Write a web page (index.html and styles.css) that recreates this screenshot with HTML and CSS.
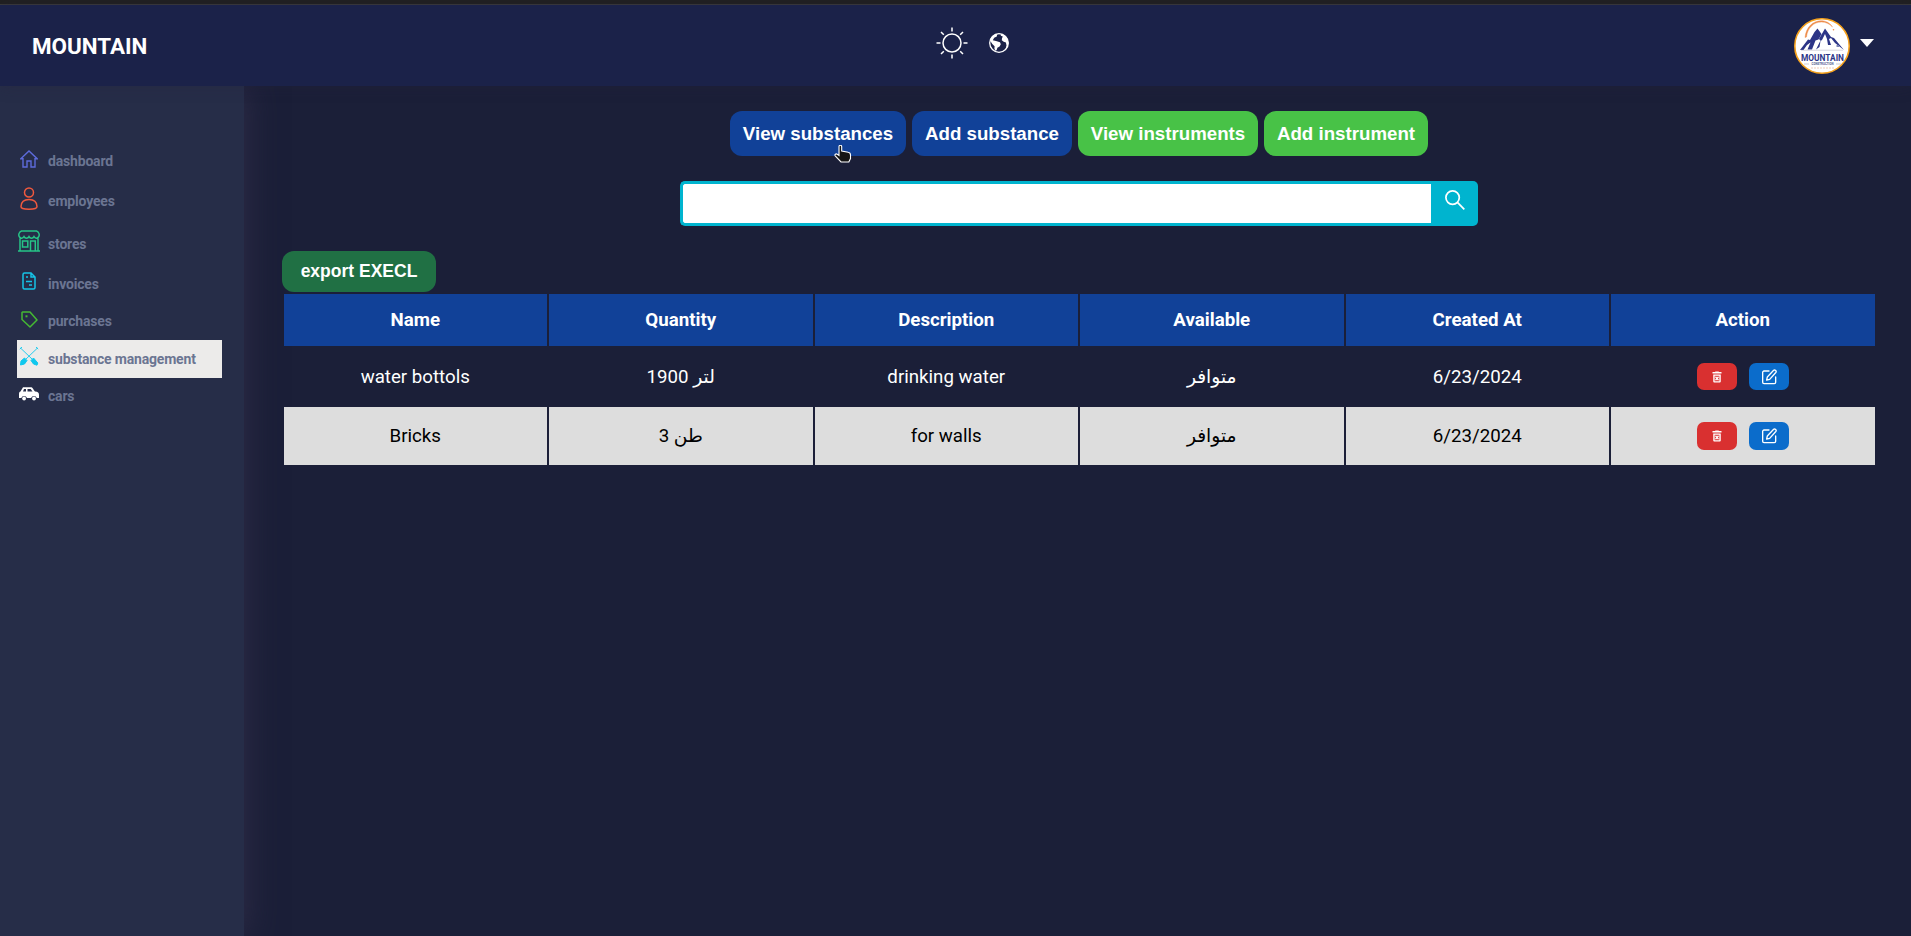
FILE: index.html
```html
<!DOCTYPE html>
<html lang="en">
<head>
<meta charset="utf-8">
<title>Mountain</title>
<link rel="stylesheet" href="styles.css">
</head>
<body>
<svg class="defs" width="0" height="0" aria-hidden="true">
  <symbol id="trash" viewBox="0 0 24 24"><path fill="currentColor" d="M3 2h5l1-1h6l1 1h5v3H3zM4.500 7h15v14a2 2 0 0 1-2 2h-11a2 2 0 0 1-2-2zm2.800 2.500v11h9.400v-11z" fill-rule="evenodd"/><path d="M9 11.500l6 7M15 11.500l-6 7" stroke="currentColor" stroke-width="2.500"/></symbol>
  <symbol id="edit" viewBox="0 0 24 24"><path fill="none" stroke="currentColor" stroke-width="2" stroke-linejoin="round" stroke-linecap="round" d="M12 3H4.500A2 2 0 0 0 2.500 5v15a2 2 0 0 0 2 2H20a2 2 0 0 0 2-2v-8M8.500 16.500l1-4.500 9.500-10c1.800-1.600 5 1.200 3.200 3.300L13 15.500z"/></symbol>
</svg>
<div class="strip"></div>
<header class="header">
  <div class="brand">MOUNTAIN</div>
  <div class="tools">
    <svg class="sun" viewBox="0 0 32 32"><g fill="none" stroke="#fff" stroke-width="1.500"><circle cx="16" cy="16" r="9"/><path d="M16 .5v4M16 27.500v4M.5 16h4M27.500 16h4M5 5l2.800 2.800M24.200 24.200L27 27M5 27l2.800-2.800M24.200 7.800L27 5"/></g></svg>
    <svg class="globe" viewBox="0 0 20 20"><circle cx="10" cy="10" r="9.300" fill="none" stroke="#fff" stroke-width="1.300"/><path fill="#fff" d="M6.500 1.300L8.200 1l-.4 2.400-2.600 1.400L3.800 7.200 7 8l4 1.200.8 2-1.200 2.300-2.200 1.200-.8 2.500-1.300.6-.9-2.400.2-2.200-2.300-2.200L1.500 8.300 1 8C1.500 5 3.500 2.500 6.500 1.300zM12 1c4.500 1 7.300 4.500 7.300 9l-.4 3-2.400 3.500 1-4-.6-3-2.200-.8-1.900-1.500.2-2 .8-1.600-2-.8z"/></svg>
  </div>
  <div class="profile">
    <svg class="avatar" viewBox="0 0 56 56"><circle cx="28" cy="28" r="27.200" fill="#fff" stroke="#f5a11c" stroke-width="1.600"/>
      <path d="M11 19.500C12 9 19 2.800 27 2.800c5 0 9 2.200 11.500 6.200-3-3.200-7-5-11-5C19.500 4 13.500 10 12.500 19z" fill="#ed8c4a" stroke="#ed8c4a" stroke-width=".4"/>
      <path d="M6 32l8-10.500 2 .5 4.500-8 3-3.500 4 5.500-3 5.500-3 1-3.500 9h-4.500l3-7-3.500 2.500L9.500 32zM22 31.500l4.500-9L25 21l6-10.500L37 19l3 1 10 12-9-7-4-5-2 1 2 6h-3l-1-6-2-5-3 6-1.500 1-1 6z" fill="#2c3587"/><circle cx="39.500" cy="11.800" r=".8" fill="#ed8c4a"/><path d="M42.500 27h2.500v2h-2.500z" fill="#7a83b6"/><path d="M7 32.200h42" stroke="#aab" stroke-width=".5"/>
      <text x="28.500" y="42.500" text-anchor="middle" textLength="43" lengthAdjust="spacingAndGlyphs" class="logo-name">MOUNTAIN</text>
      <path d="M10 46h5M42 46h5" stroke="#99a" stroke-width=".5"/><text x="28.500" y="47.200" text-anchor="middle" textLength="22" lengthAdjust="spacingAndGlyphs" class="logo-sub">CONSTRUCTION</text>
      <path d="M17 50h23" stroke="#f0cdb8" stroke-width="1" stroke-dasharray="2 1"/></svg>
    <svg class="caret" viewBox="0 0 14 8"><path fill="#fff" d="M0 0h14L7 8z"/></svg>
  </div>
</header>
<div class="layout">
  <nav class="sidebar">
    <a class="item"><span class="icon"><svg width="18" height="18" viewBox="0 0 18 18" fill="none" stroke="#5d6bdb" stroke-width="1.400"><path d="M.8 8.800L9 1l8.200 7.800H15V17h-4v-6H7v6H3V8.800z"/></svg></span>dashboard</a>
    <a class="item employees"><span class="icon"><svg width="18" height="23" viewBox="0 0 18 23" fill="none" stroke="#f0593e" stroke-width="1.500"><circle cx="9" cy="5.500" r="4.500"/><path d="M1 19.500c.2-4.500 3.500-7 8-7s7.800 2.500 8 7c.1 1.700-2 2.700-8 2.700s-8.100-1-8-2.700z"/></svg></span>employees</a>
    <a class="item stores"><span class="icon"><svg width="22" height="22" viewBox="0 0 22 22" fill="none" stroke="#26c487" stroke-width="1.500"><path d="M3.500 1h15C21 2 22 5 20.500 7c-1 1.700-3.500 1.500-4.500-.3-1 2-4 2-5 0-1 2-4 2-5 0C5 8.500 2.500 8.700 1.500 7 0 5 1 2 3.500 1zM2 8.500v12.300M20 8.500v12.300M0 21h22M4.500 11h5.300v6H4.500zM12.500 20.500V11h4.800v9.500"/></svg></span>stores</a>
    <a class="item invoices"><span class="icon"><svg width="14" height="18" viewBox="0 0 14 18" fill="none" stroke="#16c3e6" stroke-width="1.500"><path d="M2.500 1H9l4 4v10.500A1.500 1.500 0 0 1 11.500 17h-9A1.500 1.500 0 0 1 1 15.500v-13A1.500 1.500 0 0 1 2.500 1zM9 1v4h4M4 5h2M4 9.500h6M7 13h3"/></svg></span>invoices</a>
    <a class="item purchases"><span class="icon"><svg width="17" height="17" viewBox="0 0 17 17" fill="none" stroke="#45b933" stroke-width="1.500"><path d="M1.500 1H9l7 8-7 7-8-7.500V1.500z" stroke-linejoin="round"/><path d="M4.500 5.300h2" stroke-width="2"/></svg></span>purchases</a>
    <a class="item active"><span class="icon"><svg width="20" height="20" viewBox="0 0 20 20" stroke="#0fc8ee" fill="#0fc8ee"><path d="M1.500 2L13 13M18.500 2L7 13M.8 3.200L3 1M17 1l2.200 2.200" stroke-width=".9" fill="none"/><path d="M5.500 12L8 14.500 5.500 18l-4 1 .5-4zM14.500 12L12 14.500l2.500 3.500 3.500 1.200L18.800 17z"/></svg></span>substance management</a>
    <a class="item cars"><span class="icon"><svg width="20" height="14" viewBox="0 0 20 14"><path fill="#fff" fill-rule="evenodd" d="M4 .3h8.500c1 0 2 2.700 3.500 4.200C19 4.800 20 5.500 20 8v3h-2.200a3 3 0 0 0-5.700 0H8a3 3 0 0 0-5.700 0H0V7c0-1.500.5-2.200 1.500-2.500zM4 4.500h3V2H5zM8.500 4.500h5L11.700 2H8.500z"/><circle cx="5.100" cy="11.500" r="1.900" fill="#fff"/><circle cx="15" cy="11.500" r="1.900" fill="#fff"/></svg></span>cars</a>
  </nav>
  <main class="main">
    <div class="tabs">
      <button class="tab w1">View substances</button><button class="tab w2">Add substance</button><button class="tab green w3">View instruments</button><button class="tab green w4">Add instrument</button>
    </div>
    <form class="search"><input class="search-input" type="text" aria-label="Search"><button class="search-button" type="button" aria-label="Search"><svg width="20" height="20" viewBox="0 0 20 20" fill="none" stroke="#fff" stroke-width="1.700"><circle cx="7.600" cy="7.600" r="6.700"/><path d="M12.200 12.200L19.300 19.300"/></svg></button></form>
    <button class="export">export EXECL</button>
    <table class="table">
      <thead><tr><th>Name</th><th>Quantity</th><th>Description</th><th>Available</th><th>Created At</th><th>Action</th></tr></thead>
      <tbody>
        <tr><td>water bottols</td><td>1900 لتر</td><td>drinking water</td><td>متوافر</td><td>6/23/2024</td><td><div class="actions"><button class="act del" aria-label="Delete"><svg width="12" height="12"><use href="#trash"/></svg></button><button class="act" aria-label="Edit"><svg width="16" height="16"><use href="#edit"/></svg></button></div></td></tr>
        <tr><td>Bricks</td><td>3 طن</td><td>for walls</td><td>متوافر</td><td>6/23/2024</td><td><div class="actions"><button class="act del" aria-label="Delete"><svg width="12" height="12"><use href="#trash"/></svg></button><button class="act" aria-label="Edit"><svg width="16" height="16"><use href="#edit"/></svg></button></div></td></tr>
      </tbody>
    </table>
  </main>
</div>
<svg class="pointer" width="18" height="18" viewBox="0 0 18 18"><path d="M5 1.500C5-.2 7.500-.2 7.700 1.500V6l6.500 1.300c1.800.3 2.300 1.200 2.300 2.700v3.500L14.800 17H7L1.200 10.800C.2 9.500 2 8.300 3.300 9.300L5 10.500z" fill="#151515" stroke="#fff" stroke-width="1.100"/></svg>
</body>
</html>
```
FILE: styles.css
```css
* { box-sizing: border-box; }
body { margin: 0; height: 936px; overflow: hidden; background: #1b1f38; color: #fff; font-family: Roboto, "DejaVu Sans", sans-serif; display: flex; flex-direction: column; }
button { border: 0; padding: 0; margin: 0; color: #fff; font-family: "Liberation Sans", Arial, sans-serif; font-weight: 700; }
svg { display: block; }
.defs { position: absolute; }
.strip { height: 5px; flex: none; background: #202020; border-bottom: 1px solid #3a3a3a; }
.header { height: 81px; flex: none; background: #1b2249; display: grid; grid-template-columns: 904px auto 1fr; align-items: center; padding: 0 37px 0 32px; position: relative; box-shadow: 0 0 14px rgba(40, 34, 60, .35); }
.brand { font-size: 22.4px; font-weight: 700; }
.tools { display: flex; gap: 21px; align-items: center; padding-bottom: 5px; }
.sun { width: 32px; height: 32px; }
.globe { width: 20px; height: 20px; }
.profile { display: flex; justify-content: flex-end; align-items: center; gap: 10px; }
.avatar { width: 56px; height: 56px; }
.caret { width: 14px; height: 8px; margin-bottom: 6px; }
.logo-name { font: 700 8.500px Roboto, sans-serif; fill: #2c3587; }
.logo-sub { font: 700 3px Roboto, sans-serif; fill: #555d90; }
.layout { flex: 1; display: flex; min-height: 0; }
.sidebar { flex: none; width: 244px; background: #262d48; box-shadow: 0 0 32px rgba(50, 46, 74, .95); padding: 55px 22px 0 17px; display: flex; flex-direction: column; }
.item { height: 40px; display: flex; align-items: center; color: #6b7592; font-size: 14px; letter-spacing: -.18px; font-weight: 700; white-space: nowrap; }
.icon { width: 24px; margin-right: 7px; display: flex; justify-content: center; padding-bottom: 4px; flex: none; }
.employees .icon { padding-bottom: 6px; }
.stores { height: 45px; padding-top: 1px; }
.stores .icon { padding-bottom: 6px; }
.invoices { height: 36px; }
.invoices .icon { padding-bottom: 7px; }
.purchases { height: 38px; }
.active { height: 38px; background: #ecebea; }
.active .icon { padding-bottom: 7px; }
.cars { height: 36px; }
.main { flex: 1; min-width: 0; padding: 25px 35px 0 38px; }
.tabs { display: flex; justify-content: center; gap: 6px; }
.tab { height: 45px; border-radius: 12px; background: #114198; font-size: 18.700px; }
.green { background: #48c247; }
.w1 { width: 176px; } .w2 { width: 160px; } .w3 { width: 180px; } .w4 { width: 164px; }
.search { display: flex; width: 798px; height: 45px; margin: 25px auto; }
.search-input { flex: 1; min-width: 0; border: 3px solid #00b4cf; border-right: 0; border-radius: 5px 0 0 5px; background: #fff; }
.search-button { width: 47px; background: #00b4cf; border-radius: 0 5px 5px 0; display: flex; justify-content: center; align-items: center; padding-bottom: 7px; }
.export { display: block; width: 154px; height: 41px; border-radius: 12px; background: #207044; font-size: 17.500px; }
.table { width: 1595px; margin-left: -.5px; border-spacing: 2px; table-layout: fixed; font-size: 18.700px; text-align: center; }
.table th { height: 52px; padding: 0; background: #114198; font-weight: 700; }
.table td { height: 57px; padding: 0; }
.table tbody tr:nth-child(even) td { height: 58px; padding-bottom: 1px; background: #ddd; color: #000; }
.actions { display: flex; justify-content: center; gap: 12px; }
.act { width: 40px; height: 27px; border-radius: 7px; background: #0b6ccb; display: flex; align-items: center; justify-content: center; }
.del { background: #d93030; }
tr:nth-child(even) .act { height: 28px; }
.pointer { position: absolute; left: 834px; top: 145px; }
```
